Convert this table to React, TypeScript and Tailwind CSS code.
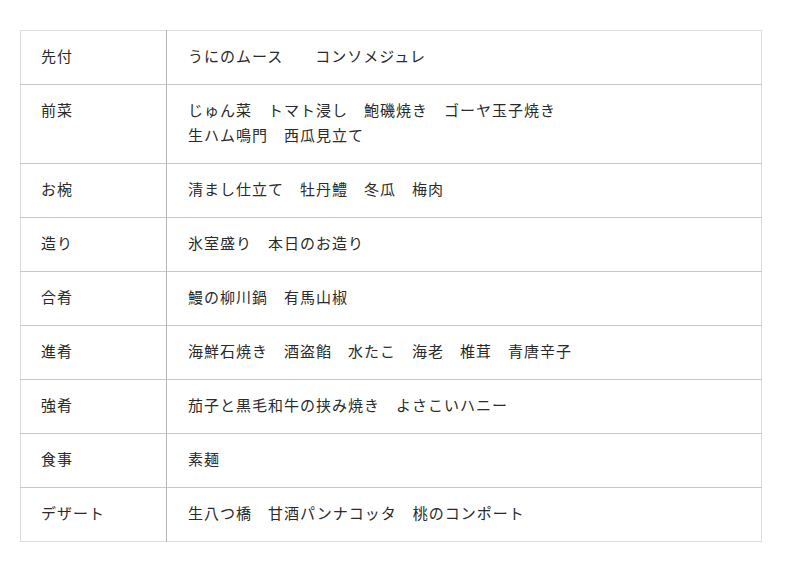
const courses: { label: string; items: string[] }[] = [
  { label: "先付", items: ["うにのムース　　コンソメジュレ"] },
  {
    label: "前菜",
    items: ["じゅん菜　トマト浸し　鮑磯焼き　ゴーヤ玉子焼き", "生ハム鳴門　西瓜見立て"],
  },
  { label: "お椀", items: ["清まし仕立て　牡丹鱧　冬瓜　梅肉"] },
  { label: "造り", items: ["氷室盛り　本日のお造り"] },
  { label: "合肴", items: ["鰻の柳川鍋　有馬山椒"] },
  { label: "進肴", items: ["海鮮石焼き　酒盗餡　水たこ　海老　椎茸　青唐辛子"] },
  { label: "強肴", items: ["茄子と黒毛和牛の挟み焼き　よさこいハニー"] },
  { label: "食事", items: ["素麺"] },
  { label: "デザート", items: ["生八つ橋　甘酒パンナコッタ　桃のコンポート"] },
];

export default function App() {
  return (
    <div
      className="min-h-screen bg-white pl-5 pr-[38px] pt-[30px] text-[#2a2a2a]"
      style={{ fontFamily: '"Noto Sans CJK JP", "Noto Sans", sans-serif' }}
    >
      <table className="w-[742px] border-collapse border border-[#dcdcdc] text-[15px] leading-[25px] tracking-[1px]">
        <tbody>
          {courses.map((c) => (
            <tr key={c.label} className="border-b border-[#c8c8c8] last:border-b-[#dcdcdc]">
              <th className="w-[146px] border-r border-[#b4b4b4] px-5 pt-3 pb-4 text-left align-top font-normal">
                {c.label}
              </th>
              <td className="px-[21px] pt-3 pb-4 align-top">
                {c.items.map((line) => (
                  <div key={line}>{line}</div>
                ))}
              </td>
            </tr>
          ))}
        </tbody>
      </table>
    </div>
  );
}
